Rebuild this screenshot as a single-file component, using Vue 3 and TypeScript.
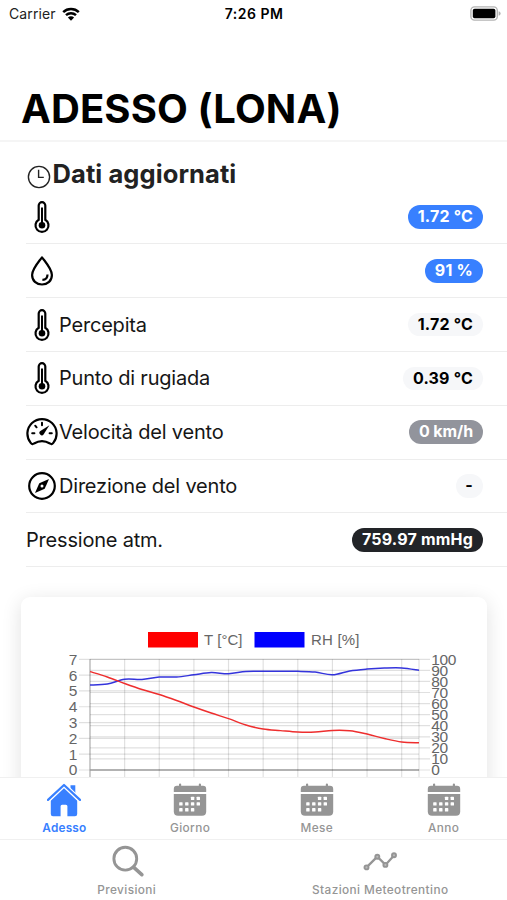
<script setup lang="ts">
type IconName = 'thermometer' | 'drop' | 'gauge' | 'compass'
type Tone = 'primary' | 'light' | 'medium' | 'dark'

interface Reading {
  icon?: IconName
  label: string
  value: string
  tone: Tone
}

const readings: Reading[] = [
  { icon: 'thermometer', label: '', value: '1.72 °C', tone: 'primary' },
  { icon: 'drop', label: '', value: '91 %', tone: 'primary' },
  { icon: 'thermometer', label: 'Percepita', value: '1.72 °C', tone: 'light' },
  { icon: 'thermometer', label: 'Punto di rugiada', value: '0.39 °C', tone: 'light' },
  { icon: 'gauge', label: 'Velocità del vento', value: '0 km/h', tone: 'medium' },
  { icon: 'compass', label: 'Direzione del vento', value: '-', tone: 'light' },
  { label: 'Pressione atm.', value: '759.97 mmHg', tone: 'dark' },
]

// Plot area inside the card
const left = 69
const right = 398
const top = 62.3
const bottom = 173
const step = (right - left) / 19

const temperature = [6.22, 5.88, 5.47, 5.09, 4.77, 4.39, 3.98, 3.6, 3.25, 2.85, 2.59, 2.49, 2.4, 2.4, 2.5, 2.48, 2.27, 1.99, 1.77, 1.72]
const humidity = [76.8, 77.7, 81.9, 81.8, 84, 84, 86, 88, 87, 89, 89.1, 89.1, 89.1, 88.5, 86, 89.5, 91.2, 92.1, 92.2, 90.1]

const yFor = (v: number, max: number): number => bottom - (v / max) * (bottom - top)

function curve(data: number[], max: number): string {
  const pts = data.map((v, i) => [left + i * step, yFor(v, max)])
  let d = `M${pts[0][0]} ${pts[0][1]}`
  for (let i = 0; i < pts.length - 1; i++) {
    const a = pts[Math.max(i - 1, 0)]
    const b = pts[i]
    const c = pts[i + 1]
    const e = pts[Math.min(i + 2, pts.length - 1)]
    d += `C${b[0] + (c[0] - a[0]) / 6} ${b[1] + (c[1] - a[1]) / 6} ${c[0] - (e[0] - b[0]) / 6} ${c[1] - (e[1] - b[1]) / 6} ${c[0]} ${c[1]}`
  }
  return d
}

const tempTicks = [0, 1, 2, 3, 4, 5, 6, 7]
const humTicks = [0, 10, 20, 30, 40, 50, 60, 70, 80, 90, 100]
const columns = [...Array.from({ length: 9 }, (_, i) => left + (i + 1) * step * 2), right]

const calendarDots: [number, number][] = [
  [19.6, 15.4], [25.3, 15.4],
  [7.9, 20.9], [13.8, 20.9], [19.6, 20.9], [25.3, 20.9],
  [7.9, 26.8], [13.8, 26.8], [19.6, 26.8],
]
const periods = ['Adesso', 'Giorno', 'Mese', 'Anno']
</script>

<template>
  <div class="screen">
    <header class="header">
      <div class="status">
        <div class="carrier">
          <span>Carrier</span>
          <svg class="wifi" viewBox="0 0 18 14">
            <path d="M1.2 5.2a11.3 11.3 0 0 1 15.6 0M4 8.2a7.3 7.3 0 0 1 10 0" fill="none" stroke="#000" stroke-width="2.5" />
            <path d="M9 13.8 5.9 10.5a4.4 4.4 0 0 1 6.2 0z" />
          </svg>
        </div>
        <div class="time">7:26 PM</div>
        <svg class="battery" viewBox="0 0 31 15">
          <rect x=".9" y=".9" width="26.4" height="13.2" rx="3.6" fill="#fff" stroke="#b4b4b4" stroke-width="1.4" />
          <rect x="2.8" y="2.8" width="22.6" height="9.4" rx="1.8" />
          <path d="M28.6 5.2q2 .6 2 2.3t-2 2.3z" fill="#b0b0b0" />
        </svg>
      </div>
      <h1>ADESSO (LONA)</h1>
    </header>

    <main class="content">
      <div class="updated">
        <svg class="clock" viewBox="0 0 24 24">
          <circle cx="12" cy="12" r="10.6" />
          <path d="M11.6 4.8v7.6h5.2" />
        </svg>
        <h2>Dati aggiornati</h2>
      </div>

      <div class="list">
        <div v-for="(r, i) in readings" :key="i" class="row">
          <svg v-if="r.icon" class="icon" viewBox="0 0 32 32">
            <g v-if="r.icon === 'thermometer'">
              <path d="M12.7 18.8V4.5a3.3 3.3 0 0 1 6.6 0v14.3a6.5 6.5 0 1 1-6.6 0z" />
              <path d="M16 6.5v17" stroke-width="2" />
              <circle cx="16" cy="24.3" r="3.3" class="solid" />
            </g>
            <g v-else-if="r.icon === 'drop'">
              <path d="M16 2.3C12.2 7.5 6.1 14 6.1 20c0 5.8 4.2 9.5 9.9 9.5s9.9-3.7 9.9-9.5c0-6-6.1-12.5-9.9-17.7z" stroke-linejoin="round" />
              <path d="M21.5 19.5c0 3.4-1.9 5.3-5.1 5.4" />
            </g>
            <g v-else-if="r.icon === 'gauge'">
              <path d="M8 27.5Q6.2 28.9 4.7 26.9A14.6 14.6 0 1 1 27.3 26.9Q25.8 28.9 24 27.5Q16 22.8 8 27.5Z" stroke-linejoin="round" />
              <path d="M16 6.8v2.4M9.2 9.7l1.4 1.6M6.2 17.3h2.2M23.6 17.3h2.2" stroke-linecap="round" stroke-width="2" />
              <path d="M23.4 9.2 17.7 18.2a2.3 2.3 0 1 1-3.3-3.1z" class="solid" />
            </g>
            <g v-else>
              <circle cx="16" cy="16" r="12.8" />
              <path d="M23 9 18.7 18.8 9 23 13.3 13.2Z" class="solid" />
              <circle cx="16" cy="16" r="1.5" class="hole" />
            </g>
          </svg>
          <span class="label">{{ r.label }}</span>
          <span class="badge" :class="r.tone">{{ r.value }}</span>
        </div>
      </div>

      <section class="card">
        <svg class="chart" viewBox="0 0 466 240">
          <rect x="127" y="35" width="50" height="15.5" fill="#f00" />
          <text x="183" y="48" textLength="38.5">T [°C]</text>
          <rect x="233.5" y="35" width="50" height="15.5" fill="#00f" />
          <text x="290" y="48" textLength="48.5">RH [%]</text>

          <g class="grid">
            <path v-for="x in columns" :key="'c' + x" :d="`M${x} ${top}V190`" />
            <path v-for="t in tempTicks" :key="'t' + t" :d="`M${left - 11} ${yFor(t, 7)}H${right}`" />
            <path v-for="t in humTicks" :key="'h' + t" :d="`M${left} ${yFor(t, 100)}H${right + 11}`" />
          </g>
          <path class="axis" :d="`M${left} ${top}V190M${left} ${bottom}H${right}`" />
          <path :d="curve(humidity, 100)" class="line blue" />
          <path :d="curve(temperature, 7)" class="line red" />

          <g class="ticks">
            <text v-for="t in tempTicks" :key="'tl' + t" x="56" :y="yFor(t, 7) + 5.4" text-anchor="end">{{ t }}</text>
            <text v-for="t in humTicks" :key="'hl' + t" x="410.2" :y="yFor(t, 100) + 5.4">{{ t }}</text>
          </g>
        </svg>
      </section>
    </main>

    <nav class="tabs">
      <div class="tabbar">
        <div v-for="(p, i) in periods" :key="p" class="tab" :class="{ active: i === 0 }">
          <svg v-if="i === 0" class="tab-icon" viewBox="0 0 34 34">
            <path d="M23.5 2.3h4.8v9.5l-4.8-4.6z" />
            <path d="M17 4.9 3.8 17.6V31q0 2.2 2.2 2.2h7.6V23.2q0-1.5 1.5-1.5h3.8q1.5 0 1.5 1.5v10H28q2.2 0 2.2-2.2V17.6z" />
            <path d="M.8 17.3 17 1.8l16.2 15.5" class="roof-gap" />
            <path d="M1 16.9 17 2l16 14.9" class="roof" />
          </svg>
          <svg v-else class="tab-icon" viewBox="0 0 34 34">
            <path d="M.8 9V6q0-3.2 3.2-3.2h2V1.5q0-1 1.1-1t1.1 1v1.3h17.6V1.5q0-1 1.1-1t1.1 1v1.3h2q3.2 0 3.2 3.2v3z" />
            <path d="M.8 11h32.4v17.6q0 4.2-4.2 4.2H5Q.8 32.8.8 28.6z" />
            <rect v-for="([x, y], k) in calendarDots" :key="k" :x="x - 1.7" :y="y - 1.7" width="3.4" height="3.4" rx=".6" fill="#fff" />
          </svg>
          <span>{{ p }}</span>
        </div>
      </div>
      <div class="tabbar">
        <div class="tab">
          <svg class="tab-icon" viewBox="0 0 34 34">
            <circle cx="15.3" cy="13.7" r="11.4" class="stroke" />
            <path d="m23.5 22.2 8.3 7.5" class="stroke handle" />
          </svg>
          <span>Previsioni</span>
        </div>
        <div class="tab">
          <svg class="tab-icon" viewBox="0 0 34 34">
            <path d="M3.5 22.4 14.3 11.7l8.2 8.2 8.7-9.7" class="trend" />
            <g class="nodes">
              <circle cx="3.5" cy="22.4" r="2" />
              <circle cx="14.3" cy="11.8" r="2" />
              <circle cx="22.4" cy="19.9" r="2" />
              <circle cx="31" cy="10.2" r="2" />
            </g>
          </svg>
          <span>Stazioni Meteotrentino</span>
        </div>
      </div>
    </nav>
  </div>
</template>

<style>
body {
  margin: 0;
  overflow: hidden;
}
</style>

<style scoped>
.screen {
  width: 507px;
  height: 900px;
  display: flex;
  flex-direction: column;
  background: #fff;
  color: #000;
  font-family: Inter, "Liberation Sans", sans-serif;
  overflow: hidden;
}
.header {
  flex: none;
  box-sizing: border-box;
  height: 142px;
  border-bottom: 2px solid #f5f5f5;
}
.status {
  display: grid;
  grid-template-columns: 1fr auto 1fr;
  align-items: center;
  height: 27px;
  padding: 0 6px 0 9px;
  font-size: 14px;
}
.carrier {
  display: flex;
  align-items: center;
  gap: 6px;
  color: #222;
  letter-spacing: 0.1px;
}
.wifi {
  width: 18px;
  height: 14px;
}
.time {
  font-weight: 600;
  letter-spacing: 0.5px;
  margin-right: 2px;
}
.battery {
  width: 31px;
  height: 15px;
  justify-self: end;
}
h1 {
  margin: 57px 0 0 21px;
  font-size: 40px;
  line-height: 50px;
  font-weight: 700;
  letter-spacing: 0.1px;
  white-space: nowrap;
}
.content {
  flex: 1;
  min-height: 0;
  overflow: hidden;
}
.updated {
  display: flex;
  align-items: center;
  height: 48.6px;
  padding-left: 27px;
  box-sizing: border-box;
  gap: 1.5px;
}
.clock {
  width: 24px;
  height: 24px;
  margin-top: 21px;
  fill: none;
  stroke: #222;
  stroke-width: 1.4;
}
h2 {
  margin: 16px 0 0;
  font-size: 25.5px;
  line-height: 32px;
  font-weight: 700;
  color: #222;
  letter-spacing: 0.08px;
  white-space: nowrap;
}
.list {
  padding-left: 26px;
}
.row {
  display: flex;
  align-items: center;
  box-sizing: border-box;
  height: 53.8px;
  padding-right: 24.5px;
  border-bottom: 1.5px solid #ededed;
}
.icon {
  width: 32px;
  height: 32px;
  margin-right: 1px;
  fill: none;
  stroke: #000;
  stroke-width: 2.2;
}
.icon .solid {
  fill: #000;
  stroke: none;
}
.icon .hole {
  fill: #fff;
  stroke: none;
}
.label {
  flex: 1;
  font-size: 20px;
  letter-spacing: -0.2px;
  color: #161616;
  white-space: nowrap;
}
.badge {
  box-sizing: border-box;
  height: 23.5px;
  padding: 0 9.5px;
  border-radius: 12px;
  font-size: 16px;
  line-height: 23.5px;
  font-weight: 700;
  letter-spacing: 0.2px;
  white-space: nowrap;
}
.primary {
  background: #3880ff;
  color: #fff;
}
.light {
  background: #f6f7f9;
}
.medium {
  background: #92949c;
  color: #fff;
  letter-spacing: -0.1px;
}
.dark {
  background: #222428;
  color: #fff;
}
.card {
  margin: 30px 20px 0 21px;
  border-radius: 9px;
  background: #fff;
  box-shadow: 0 4px 20px rgba(0, 0, 0, 0.12);
}
.chart {
  display: block;
  width: 466px;
  height: 240px;
  font-family: "Liberation Sans", Arial, sans-serif;
  font-size: 15px;
  fill: #666;
}
.ticks {
  font-size: 15.5px;
  letter-spacing: -0.4px;
}
.grid path {
  fill: none;
  stroke: rgba(0, 0, 0, 0.12);
  stroke-width: 1.2;
}
.axis {
  fill: none;
  stroke: rgba(0, 0, 0, 0.28);
  stroke-width: 1.4;
}
.line {
  fill: none;
  stroke-width: 1.5;
}
.red {
  stroke: #ee2e2e;
}
.blue {
  stroke: #3434dc;
}
.tabs {
  flex: none;
  position: relative;
  background: #fff;
}
.tabbar {
  display: flex;
  box-sizing: border-box;
  height: 61.5px;
  border-top: 1.5px solid #f0f0f0;
}
.tab {
  flex: 1 1 0;
  display: flex;
  flex-direction: column;
  align-items: center;
  padding-top: 5px;
  color: #959595;
  font-size: 11.8px;
  line-height: 15px;
  font-weight: 500;
  letter-spacing: 0.4px;
}
.tab span {
  margin-top: 4px;
}
.tab.active {
  box-sizing: border-box;
  color: #3880ff;
  font-weight: 600;
  letter-spacing: 0.2px;
}
.active .tab-icon,
.active span {
  margin-left: 2px;
}
.tab-icon {
  width: 34px;
  height: 34px;
  fill: currentColor;
}
.roof-gap {
  fill: none;
  stroke: #fff;
  stroke-width: 4.5;
}
.roof {
  fill: none;
  stroke: currentColor;
  stroke-width: 2.2;
  stroke-linecap: round;
  stroke-linejoin: round;
}
.stroke {
  fill: none;
  stroke: currentColor;
  stroke-width: 2.9;
}
.handle {
  stroke-width: 3.6;
  stroke-linecap: round;
}
.trend {
  fill: none;
  stroke: currentColor;
  stroke-width: 2.3;
}
.nodes circle {
  fill: #bbb;
  stroke: currentColor;
  stroke-width: 1.9;
}
</style>
